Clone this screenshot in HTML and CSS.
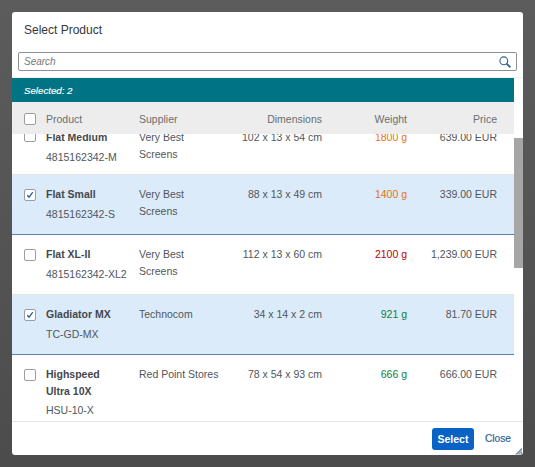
FILE: index.html
```html
<!DOCTYPE html>
<html lang="en">
<head>
<meta charset="utf-8" />
<title>Select Product</title>
<link rel="stylesheet" href="styles.css">
</head>
<body>
	<div class="dialog">
		<div class="title">Select Product</div>

		<div class="search-bar">
			<div class="search">
				<span class="search-text">Search</span>
				<svg class="search-icon" width="12" height="12" viewBox="0 0 12 12"><circle cx="4.8" cy="4.8" r="3.9" fill="none" stroke="#2f6497" stroke-width="1.1"/><path d="M7.6 7.6 L11.4 11.4" stroke="#2f5f8f" stroke-width="1.7"/></svg>
			</div>
		</div>

		<div class="content">
			<div class="table">
				<div class="info">Selected: 2</div>

				<div class="row head">
					<span class="check"></span>
					<span>Product</span>
					<span>Supplier</span>
					<span class="num">Dimensions</span>
					<span class="num">Weight</span>
					<span class="num">Price</span>
				</div>

				<div class="rows">
					<div class="rows-inner">
						<div class="row item first">
							<span class="check"></span>
							<div><div class="name">Flat Medium</div><div class="code">4815162342-M</div></div>
							<div class="supplier">Very Best Screens</div>
							<div class="num">102 x 13 x 54 cm</div>
							<div class="num orange">1800 g</div>
							<div class="num">639.00 EUR</div>
						</div>
						<div class="row item selected">
							<span class="check"><svg width="8" height="8" viewBox="0 0 8 8"><path d="M1.2 4.2 L3.1 6.2 L6.8 1.2" fill="none" stroke="#2f5f9f" stroke-width="1.3"/></svg></span>
							<div><div class="name">Flat Small</div><div class="code">4815162342-S</div></div>
							<div class="supplier">Very Best Screens</div>
							<div class="num">88 x 13 x 49 cm</div>
							<div class="num orange">1400 g</div>
							<div class="num">339.00 EUR</div>
						</div>
						<div class="row item">
							<span class="check"></span>
							<div><div class="name">Flat XL-II</div><div class="code">4815162342-XL2</div></div>
							<div class="supplier">Very Best Screens</div>
							<div class="num">112 x 13 x 60 cm</div>
							<div class="num red">2100 g</div>
							<div class="num">1,239.00 EUR</div>
						</div>
						<div class="row item selected">
							<span class="check"><svg width="8" height="8" viewBox="0 0 8 8"><path d="M1.2 4.2 L3.1 6.2 L6.8 1.2" fill="none" stroke="#2f5f9f" stroke-width="1.3"/></svg></span>
							<div><div class="name">Gladiator MX</div><div class="code">TC-GD-MX</div></div>
							<div class="supplier">Technocom</div>
							<div class="num">34 x 14 x 2 cm</div>
							<div class="num green">921 g</div>
							<div class="num">81.70 EUR</div>
						</div>
						<div class="row item">
							<span class="check"></span>
							<div><div class="name">Highspeed Ultra 10X</div><div class="code">HSU-10-X</div></div>
							<div class="supplier">Red Point Stores</div>
							<div class="num">78 x 54 x 93 cm</div>
							<div class="num green">666 g</div>
							<div class="num">666.00 EUR</div>
						</div>
					</div>
				</div>
			</div>
			<div class="scrollbar"><div class="thumb"></div></div>
		</div>

		<div class="footer">
			<span class="btn-select">Select</span>
			<span class="btn-close">Close</span>
		</div>

		<svg class="resize" width="8" height="8" viewBox="0 0 8 8"><path d="M7 0.5 L7 7.5 L0 7.5 Z" fill="#7d91a8"/><path d="M4.5 5 L3 7.5 M6.5 3 L5 7.5" stroke="#fff" stroke-width="0.5"/></svg>
	</div>
</body>
</html>
```

FILE: styles.css
```css
html, body { height: 100%; }

body {
	background: linear-gradient(#5c5c5c, #4c4c4c);
	margin: 0;
	padding: 12px;
	box-sizing: border-box;
	overflow: hidden;
	font-family: "Liberation Sans", Arial, sans-serif;
	font-size: 10.5px;
	color: #50565c;
}

.dialog {
	position: relative;
	width: 511px;
	height: 443px;
	background: #fff;
	border-radius: 3px;
	display: flex;
	flex-direction: column;
	overflow: hidden;
}

.title {
	height: 36px;
	padding: 0 12px;
	display: flex;
	align-items: center;
	font-size: 12px;
	color: #32363a;
}

.search-bar {
	height: 30px;
	padding: 4px 6px 0;
	box-sizing: border-box;
	border-bottom: 1px solid #f1f1f1;
}

.search {
	height: 19px;
	border: 1px solid #8b8f96;
	border-radius: 2px;
	box-sizing: border-box;
	display: flex;
	align-items: center;
	justify-content: space-between;
	padding: 0 5px;
}

.search-text {
	font-size: 10px;
	font-style: italic;
	color: #74777a;
}

.content {
	flex: 1;
	display: flex;
	min-height: 0;
}

.table {
	width: 502px;
	display: flex;
	flex-direction: column;
}

.info {
	height: 24px;
	flex: none;
	background: #007484;
	color: #fff;
	font-style: italic;
	font-size: 9.7px;
	-webkit-text-stroke: 0.15px #fff;
	display: flex;
	align-items: center;
	padding-left: 12px;
}

.row {
	display: grid;
	grid-template-columns: 22px 93px 101px 82px 85px 90px;
	padding: 0 17px 0 12px;
}

.num { text-align: right; }

.head {
	height: 32px;
	flex: none;
	box-sizing: border-box;
	padding-top: 1px;
	background: #ededee;
	align-items: center;
	color: #6a6d70;
	position: relative;
	z-index: 1;
}

.check {
	display: flex;
	align-items: center;
	justify-content: center;
	width: 12px;
	height: 12px;
	box-sizing: border-box;
	background: #fff;
	border: 1px solid #9a9da1;
	border-radius: 2px;
}

.rows {
	flex: 1;
	min-height: 0;
	overflow: hidden;
}

.rows-inner { margin-top: -18px; }

.item {
	height: 60px;
	box-sizing: border-box;
	padding-top: 11px;
	border-bottom: 1px solid #e4e4e4;
	line-height: 16.5px;
}

.item .check { margin-top: 3px; }

.item.first { height: 59px; padding-top: 13px; }

.item.first .check { margin-top: 1px; }

.item.selected {
	background: #dcebf9;
	border-bottom-color: #5b82ab;
}

.item:last-child { height: 67px; }

.name { max-width: 70px; font-weight: bold; color: #44484c; }

.code { margin-top: 3px; color: #50565c; }

.supplier { max-width: 85px; }

.orange { color: #e9730c; }
.red { color: #bb0000; }
.green { color: #107e3e; }

.scrollbar {
	width: 9px;
	padding-top: 60px;
	background: #fff;
}

.thumb {
	height: 130px;
	background: #a6a6a6;
}

.footer {
	height: 34px;
	flex: none;
	box-sizing: border-box;
	border-top: 1px solid #e4e4e4;
	display: flex;
	align-items: center;
	justify-content: flex-end;
	gap: 11px;
	padding-right: 12px;
}

.btn-select {
	background: #0a62c4;
	color: #fff;
	font-weight: bold;
	border-radius: 3px;
	width: 42px;
	height: 22px;
	display: flex;
	align-items: center;
	justify-content: center;
}

.btn-close {
	font-size: 10.2px;
	color: #2f6497;
	-webkit-text-stroke: 0.2px #2f6497;
}

.resize {
	position: absolute;
	right: 0;
	bottom: 0;
}
```
